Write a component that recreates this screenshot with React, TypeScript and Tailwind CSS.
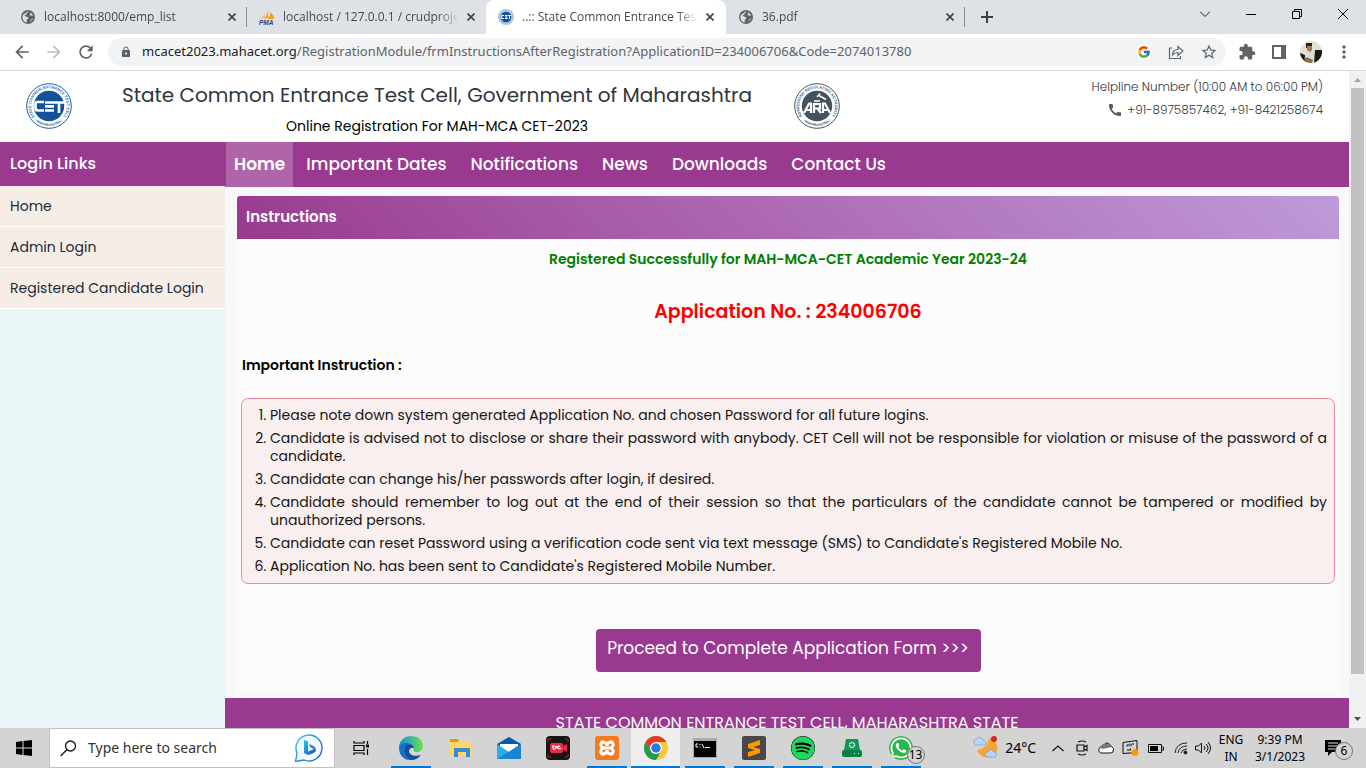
import React, { ReactNode } from "react";
import { FaWhatsapp, FaSpotify } from "react-icons/fa";
import { FcGoogle } from "react-icons/fc";
import { MdExtension, MdCall, MdLock, MdArrowBack, MdArrowForward, MdRefresh, MdStarBorder, MdMoreVert } from "react-icons/md";

const seals = {
  cet: { ring: "#1d5fa8", fill: "#12529b", top: "STATE COMMON ENTRANCE TEST CELL", name: "CET" },
  ara: { ring: "#46545c", fill: "#43535b", top: "ADMISSIONS REGULATING AUTHORITY", name: "ARA" },
};

function Seal({ kind }: { kind: "cet" | "ara" }) {
  const s = seals[kind];
  const id = "arc-" + kind;
  return (
    <svg viewBox="0 0 46 46" className="size-[46px] shrink-0" role="img" aria-label={s.name + " logo"}>
      <defs>
        <path id={id} d="M8.500 33.500A17.800 17.800 0 1 1 37.500 33.500" />
        <path id={id + "b"} d="M6 34A20.500 20.500 0 0 0 40 34" />
      </defs>
      <circle cx="23" cy="23" r="22.3" fill="#fff" stroke={s.ring} strokeWidth="1" />
      <circle cx="23" cy="23" r="15.2" fill={s.fill} />
      <text fontSize="4" fontWeight="700" fill="#2f6ea8" fontFamily="Liberation Sans, sans-serif">
        <textPath href={"#" + id} startOffset="50%" textAnchor="middle">{s.top}</textPath>
      </text>
      <text fontSize="3.4" fontWeight="700" fill={s.ring} fontFamily="Liberation Sans, sans-serif">
        <textPath href={"#" + id + "b"} startOffset="50%" textAnchor="middle">• MAHARASHTRA •</textPath>
      </text>
      {kind === "cet" ? (
        <g fill="none" stroke="#fff" strokeWidth="2.7">
          <path d="M18 19H11Q9.500 19 9.500 21V25Q9.500 27.500 12 27.500H18M19 19.500H28M19 23.300H28M19 27.500H28M28 19.500H38M33 20V30" />
        </g>
      ) : (
        <g fill="none" stroke="#fff" strokeWidth="2.200">
          <path d="M10 30L15 20.500H17V30M12 27H17M20 30V21H26V25.500H21M23 25L27 30M29 30V20.500H31L36 30M29 27H34" />
          <path d="M20 18H26M23 14L26 10.500M25 12.500L32 16.500" strokeWidth="1.500" />
        </g>
      )}
    </svg>
  );
}

function CetFavicon() {
  return (
    <svg viewBox="0 0 16 16" className="size-4 shrink-0" aria-hidden="true">
      <circle cx="8" cy="8" r="8" fill="#a9c5e0" />
      <circle cx="8" cy="8" r="5.300" fill="#12529b" />
      <path d="M6 6.500H3.700V9.500H6M7 6.500H9.500M7 8H9.500M7 9.500H9.500M10 6.500H13M11.500 7V10" fill="none" stroke="#fff" />
    </svg>
  );
}

function Globe() {
  return (
    <svg viewBox="0 0 14 14" className="mx-px size-[14px] shrink-0" aria-hidden="true">
      <circle cx="7" cy="7" r="7" fill="#5f6368" />
      <path d="M7 1.300C8 2.500 5 3 5.500 4.500L3.500 5.500C4 7 7.500 6.300 7.500 8.300L5.800 9.500V12.600C2 12 .8 8 1.800 5M9 2C10 3.500 8 4 9 5.500H12.500M9 12.200C10 11 9.500 10 11 9L12.500 8.500" fill="#dee1e6" />
    </svg>
  );
}

function PmaIcon() {
  return (
    <svg viewBox="0 0 16 16" className="size-4 shrink-0" aria-hidden="true">
      <path d="M5 1Q6 6 2 10Q5 8 6 10Z" fill="#f7b85a" />
      <path d="M8 0Q9 6 5 10Q9 8 10 10Z" fill="#f89c0e" />
      <path d="M11 3Q15 6 15 10H9Q12 7 11 3Z" fill="#f89c0e" />
      <text x="0" y="16" fontSize="6.500" fontWeight="700" fontStyle="italic" fill="#353d70" fontFamily="Liberation Sans, sans-serif">PMA</text>
    </svg>
  );
}

function CloseX() {
  return (
    <svg viewBox="0 0 8 8" className="size-2" fill="none" stroke="#3c4043" strokeWidth="1.600" aria-hidden="true">
      <path d="M.5.5l7 7M7.500.5l-7 7" />
    </svg>
  );
}

function Tab({ icon, title, active, divider }: { icon: ReactNode; title: string; active?: boolean; divider?: boolean }) {
  return (
    <div className={active ? "relative flex h-[34px] w-[240px] items-center gap-1 rounded-t-lg bg-white pl-3 pr-2" : "relative flex h-[34px] w-[239px] items-center gap-1 pl-3 pr-[7px]"}>
      {icon}
      <a href="#tab" className="ml-1 min-w-0 flex-1 overflow-hidden whitespace-nowrap text-xs text-[#45484c] [mask-image:linear-gradient(to_right,black_88%,transparent)]">{title}</a>
      <button aria-label={"Close " + title} className="flex size-4 items-center justify-center"><CloseX /></button>
      {divider && <span className="absolute right-0 top-[7px] h-5 w-px bg-[#8a8d91]" />}
    </div>
  );
}

function BrowserBar() {
  return (
    <header className="shrink-0 font-['Open_Sans','Noto_Sans',sans-serif]">
      <div className="flex h-[34px] bg-[#dee1e6] pl-2">
        <Tab icon={<Globe />} title="localhost:8000/emp_list" divider />
        <Tab icon={<PmaIcon />} title="localhost / 127.0.0.1 / crudprojec" />
        <Tab icon={<CetFavicon />} title="..:: State Common Entrance Test C" active />
        <Tab icon={<Globe />} title="36.pdf" divider />
        <button aria-label="New tab" className="ml-[10px] flex w-6 items-center justify-center">
          <svg viewBox="0 0 12 12" className="size-3" stroke="#3c4043" strokeWidth="2" aria-hidden="true"><path d="M6 0v12M0 6h12" /></svg>
        </button>
        <div className="ml-auto flex h-7">
          <button aria-label="Search tabs" className="flex w-[46px] items-center justify-center"><svg viewBox="0 0 10 6" className="h-[6px] w-[10px]" fill="none" stroke="#222"><path d="M0 .5l5 5 5-5" /></svg></button>
          <button aria-label="Minimize" className="flex w-[46px] items-center justify-center"><span className="h-px w-[10px] bg-black" /></button>
          <button aria-label="Restore" className="flex w-[46px] items-center justify-center"><svg viewBox="0 0 10 10" className="size-[10px]" fill="none" stroke="#000"><path d="M.5 2.500h7v7h-7zM2.500 2.500v-2h7v7h-2" /></svg></button>
          <button aria-label="Close" className="flex w-[46px] items-center justify-center"><svg viewBox="0 0 10 10" className="size-[10px]" stroke="#000"><path d="M0 0l10 10M10 0L0 10" /></svg></button>
        </div>
      </div>
      <div className="flex h-[37px] items-center border-b border-[#d5d7da] bg-white pl-3 pr-3 text-[#5f6368]">
        <button aria-label="Back"><MdArrowBack className="size-5" /></button>
        <button aria-label="Forward" className="ml-3 text-[#bcbec1]"><MdArrowForward className="size-5" /></button>
        <button aria-label="Reload" className="ml-3"><MdRefresh className="size-5" /></button>
        <div className="ml-3 flex h-7 flex-1 items-center rounded-full bg-[#f1f3f4] pl-3 pr-2">
          <MdLock className="size-3 shrink-0" />
          <a href="#address" className="ml-[10px] flex-1 whitespace-nowrap font-['Noto_Sans',sans-serif] text-[13px]"><span className="text-[#202124]">mcacet2023.mahacet.org</span>/RegistrationModule/frmInstructionsAfterRegistration?ApplicationID=234006706&amp;Code=2074013780</a>
          <button aria-label="Google search" className="flex size-4 items-center justify-center rounded-full bg-white"><FcGoogle className="size-[14px]" /></button>
          <button aria-label="Share" className="ml-4"><svg viewBox="0 0 16 16" className="size-4" fill="none" stroke="#5f6368" strokeWidth="1.200"><path d="M4 4H1.500v10.500h11V12M4.500 11Q4.500 5.500 10 5.500V2.500l5 4.500-5 4.500V8.500Q6.500 8.500 4.500 11Z" /></svg></button>
          <button aria-label="Bookmark" className="ml-4"><MdStarBorder className="size-[18px]" /></button>
        </div>
        <button aria-label="Extensions" className="ml-3"><MdExtension className="size-[18px]" /></button>
        <button aria-label="Side panel" className="ml-4"><svg viewBox="0 0 14 14" className="size-[14px]"><path d="M1 1h12v12H1z" fill="#fff" stroke="#5f6368" strokeWidth="2" /><path d="M9 0h5v14H9z" fill="#5f6368" /></svg></button>
        <button aria-label="Profile" className="ml-[14px]">
          <svg viewBox="0 0 22 22" className="size-[22px]">
            <defs><clipPath id="face"><circle cx="11" cy="11" r="11" /></clipPath></defs>
            <g clipPath="url(#face)"><path d="M0 0h22v22H0z" fill="#e4e0d2" /><path d="M0 12l5 2 1 8H0zM15 9h7v13h-8z" fill="#17191b" /><path d="M5 10q5-3 9 1v8H5z" fill="#dedbd4" /><path d="M7 4h5v5l-2 2-3-2z" fill="#a17759" /><path d="M6 2h6v3H7v2H6z" fill="#252324" /><path d="M4 16l5 1 4 2-1 3H5z" fill="#8f6b4c" /></g>
          </svg>
        </button>
        <button aria-label="Menu" className="ml-3"><MdMoreVert className="size-5" /></button>
      </div>
    </header>
  );
}

const navItems = ["Important Dates", "Notifications", "News", "Downloads", "Contact Us"];
const sideItems = ["Home", "Admin Login", "Registered Candidate Login"];
const instructions = [
  "Please note down system generated Application No. and chosen Password for all future logins.",
  "Candidate is advised not to disclose or share their password with anybody. CET Cell will not be responsible for violation or misuse of the password of a candidate.",
  "Candidate can change his/her passwords after login, if desired.",
  "Candidate should remember to log out at the end of their session so that the particulars of the candidate cannot be tampered or modified by unauthorized persons.",
  "Candidate can reset Password using a verification code sent via text message (SMS) to Candidate's Registered Mobile No.",
  "Application No. has been sent to Candidate's Registered Mobile Number.",
];

function SitePage() {
  return (
    <div className="flex min-w-0 flex-1 flex-col bg-white font-[Poppins,Inter,sans-serif]">
      <div className="flex h-[71px] shrink-0 items-start px-[26px]">
        <div className="pt-3"><Seal kind="cet" /></div>
        <div className="ml-[30px] w-[670px] pt-2 text-center">
          <h1 className="whitespace-nowrap text-xl leading-8 text-[#2f353b]">State Common Entrance Test Cell, Government of Maharashtra</h1>
          <p className="text-sm leading-[30px] text-black">Online Registration For MAH-MCA CET-2023</p>
        </div>
        <div className="ml-[22px] pt-3"><Seal kind="ara" /></div>
        <div className="ml-auto whitespace-nowrap pt-1 text-right text-xs font-light leading-[23px] text-[#2f353b]">
          <p>Helpline Number (10:00 AM to 06:00 PM)</p>
          <p className="flex items-center justify-end gap-1"><MdCall className="size-4 text-[#55595c]" />+91-8975857462, +91-8421258674</p>
        </div>
      </div>
      <div className="flex min-h-0 flex-1">
        <aside className="w-[225px] shrink-0 bg-[#e8f6f8]">
          <h2 className="h-11 bg-[#993990] pl-[10px] text-base font-medium leading-[44px] text-white">Login Links</h2>
          <nav>
            {sideItems.map((t) => (
              <a key={t} href="#login" className="block h-[41px] border-b border-white bg-[#f5ede6] pl-[10px] text-sm leading-10 text-[#1b2b38]">{t}</a>
            ))}
          </nav>
        </aside>
        <main className="flex min-w-0 flex-1 flex-col overflow-hidden bg-[#f8f8f8]">
          <nav className="flex h-[45px] shrink-0 items-center gap-6 bg-[#993990] pl-px text-[17px] text-white">
            <a href="#home" className="-mr-[11px] flex h-full items-center bg-[#b064a9] px-2 font-semibold">Home</a>
            {navItems.map((t) => <a key={t} href="#nav" className="whitespace-nowrap font-medium">{t}</a>)}
          </nav>
          <section className="ml-3 mr-[10px] mt-[9px] shrink-0 bg-[#fcfcfc]">
            <h2 className="h-[43px] rounded-t-[3px] bg-linear-45 from-[#993990] to-[#be9ad9] pl-[9px] text-[15px] font-semibold leading-[41px] text-white">Instructions</h2>
            <p className="pt-[10px] text-center text-sm font-semibold leading-5 text-[#008000]">Registered Successfully for MAH-MCA-CET Academic Year 2023-24</p>
            <p className="pt-[30px] text-center text-[19px] font-semibold leading-[26px] text-[#ff0000]">Application No. : 234006706</p>
            <h3 className="pl-[5px] pt-[30px] text-sm font-semibold leading-5 text-black">Important Instruction :</h3>
            <ol className="mx-1 mt-[23px] list-decimal space-y-[5px] rounded-[7px] border border-[#ee8a98] bg-[#f8efee] pb-2 pl-7 pr-[7px] pt-[7px] text-justify text-sm leading-[18px] text-[#151515]">
              {instructions.map((t) => <li key={t}>{t}</li>)}
            </ol>
            <div className="flex justify-center pb-5 pt-[45px]">
              <button className="h-[43px] w-[385px] rounded bg-[#993990] pb-1 text-[17px] text-white">Proceed to Complete Application Form &gt;&gt;&gt;</button>
            </div>
          </section>
          <footer className="mt-[6px] min-h-[120px] shrink-0 bg-[#993990] pt-[14px] text-center text-base leading-[22px] text-white">STATE COMMON ENTRANCE TEST CELL, MAHARASHTRA STATE</footer>
        </main>
      </div>
    </div>
  );
}

function ScrollBar() {
  return (
    <div className="flex w-[17px] shrink-0 flex-col items-center bg-[#f1f1f1]" aria-hidden="true">
      <svg viewBox="0 0 17 17" className="size-[17px]"><path d="M5 11l3.500-4 3.500 4z" fill="#a3a3a3" /></svg>
      <span className="w-[13px] flex-[586] bg-[#c1c1c1]" />
      <span className="flex-[37]" />
      <svg viewBox="0 0 17 17" className="size-[17px]"><path d="M5 6l3.500 4L12 6z" fill="#505050" /></svg>
    </div>
  );
}

const apps: { name: string; open?: boolean; active?: boolean; icon: ReactNode }[] = [
  { name: "Edge", open: true, icon: <svg viewBox="0 0 24 24" className="size-6"><defs><linearGradient id="eg" x1="0" x2="1"><stop stopColor="#168ed5" /><stop offset="1" stopColor="#6be350" /></linearGradient></defs><path d="M0 12C0 4 6 0 12 0c7 0 12 4 12 10 0 4-3 6-6 6-4 0-4-2-3-4 0-3-3-5-6-5-4 0-7 2-9 5Z" fill="url(#eg)" /><path d="M0 12c1-4 5-6 9-5 4 0 6 3 6 5-2-2-5 0-5 3 0 4 5 6 11 4-3 4-7 5-10 5C4 24 0 18 0 12Z" fill="#1471c5" /><path d="M8 9c-4 3-3 11 4 15 4 0 8-2 10-5-6 3-12 0-12-4 0-3 3-4 5-3-1-2-4-4-7-3Z" fill="#124f9b" /></svg> },
  { name: "File Explorer", icon: <svg viewBox="0 0 24 24" className="size-6"><path d="M2 3h8l2 2h11v15H2z" fill="#ffd766" /><path d="M2 3h8l1 3H2z" fill="#df9a13" /><path d="M6 12h16v9h-4v-5h-8v5H6z" fill="#368bd3" /></svg> },
  { name: "Mail", icon: <svg viewBox="0 0 24 24" className="size-6"><path d="M0 8l12-7 12 7v3H0z" fill="#0a58a8" /><path d="M3 8h18v8H3z" fill="#fff" /><path d="M0 8l12 8 12-8v15H0z" fill="#28aeea" /><path d="M0 23L24 8v15z" fill="#1b84d2" /></svg> },
  { name: "Screen Recorder", icon: <svg viewBox="0 0 24 24" className="size-6"><rect width="24" height="24" rx="4" fill="#151515" /><path d="M2 6V3h3M19 3h3v3M2 18v3h3M19 21h3v-3" stroke="#b91c2d" fill="none" /><rect x="4" y="7" width="13" height="10" rx="2" fill="#ed2945" /><path d="M16 11l5-3v8l-5-3z" fill="#ed2945" /><path d="M14 10.500q-2-1-4 1.500t-3 0 1-2 4 2 3 0" fill="none" stroke="#fff" strokeWidth="1.200" /></svg> },
  { name: "XAMPP", open: true, icon: <svg viewBox="0 0 24 24" className="size-6"><rect width="24" height="24" rx="3" fill="#f47a20" /><path d="M7 6q5 0 5 4 0-4 5-4 3 3-1 6 4 3 1 6-5 0-5-4 0 4-5 4-3-3 1-6-4-3-1-6Z" fill="none" stroke="#fff" strokeWidth="3" /><path d="M8 12h8" stroke="#fff" strokeWidth="3" /></svg> },
  { name: "Chrome", open: true, active: true, icon: <svg viewBox="0 0 24 24" className="size-6"><circle cx="12" cy="12" r="12" fill="#fcc934" /><path d="M1.600 6A12 12 0 0 1 22.400 6H12L6.800 15Z" fill="#e33b2e" /><path d="M1.600 6A12 12 0 0 0 12 24L17.200 15H6.800Z" fill="#1e9e4d" /><circle cx="12" cy="12" r="6" fill="#fff" /><circle cx="12" cy="12" r="4.700" fill="#2878e8" /></svg> },
  { name: "Command Prompt", open: true, icon: <svg viewBox="0 0 24 24" className="size-6"><path d="M0 2h24v20H0z" fill="#aaa" /><path d="M1 5h22v16H1z" fill="#050505" /><path d="M5 8H3v3h2M7 8v1M7 10.500v1M9 8l2 4M12 11.500h5" stroke="#fff" fill="none" /></svg> },
  { name: "Sublime Text", open: true, icon: <svg viewBox="0 0 24 24" className="size-6"><rect width="24" height="24" rx="2" fill="#484848" /><path d="M6 8l12-4v5l-7 2 7 2v4L6 21v-5l7-2-7-2z" fill="#ff9800" /></svg> },
  { name: "Spotify", open: true, icon: <span className="flex size-6 rounded-full bg-black"><FaSpotify className="size-6 text-[#1ed760]" /></span> },
  { name: "Drive Utility", open: true, icon: <svg viewBox="0 0 24 24" className="size-6"><path d="M6 3h12l2 11H4z" fill="#139454" /><rect x="2" y="14" width="20" height="7" rx="2" fill="#0a8044" /><circle cx="12" cy="9" r="2.500" fill="none" stroke="#dff8e5" strokeWidth="1.500" strokeDasharray="1.500 .6" /><path d="M14 17.500h1M18 17.500h1" stroke="#fff" /></svg> },
];

function Badge({ n }: { n: number }) {
  return <span className="absolute -bottom-1 -right-3 flex size-[18px] items-center justify-center rounded-full border border-[#777] bg-[#d4d4d4] text-xs text-black">{n}</span>;
}

function TaskBar() {
  return (
    <footer className="flex h-10 shrink-0 items-stretch bg-[#d4d4d4] font-['Noto_Sans',sans-serif] text-black">
      <button aria-label="Start" className="flex w-12 items-center justify-center"><svg viewBox="0 0 16 16" className="size-4"><path d="M0 2l6.500-1v6.500H0zM7.500 1L16 0v7.500H7.500zM0 8.500h6.500V15L0 14zM7.500 8.500H16V16l-8.500-1z" /></svg></button>
      <label className="ml-px flex w-[286px] items-center border border-[#c1c1c1] bg-white px-[10px]">
        <svg viewBox="0 0 17 17" className="size-[17px]" fill="none" stroke="#111" strokeWidth="1.300"><circle cx="10.500" cy="6" r="5" /><path d="M7 9.500L.7 16" /></svg>
        <input aria-label="Type here to search" placeholder="Type here to search" className="ml-[11px] min-w-0 flex-1 text-sm outline-none placeholder:text-[#333]" />
        <svg viewBox="0 0 30 30" className="size-[30px]" aria-hidden="true"><defs><linearGradient id="bg" x1="0" x2="1" y2="1"><stop stopColor="#25c5ef" /><stop offset="1" stopColor="#2350b5" /></linearGradient></defs><path d="M1.500 28.500L3 20A13 13 0 1 1 10 27Z" fill="#f1f8ff" stroke="url(#bg)" strokeWidth="1.300" /><path d="M10 7l4 1.500v10L20 16l-4-2-1-3q7 2 7 6 0 3-8 5l-4-2z" fill="url(#bg)" /></svg>
      </label>
      <button aria-label="Task View" className="flex w-[51px] items-center justify-center"><svg viewBox="0 0 16 16" className="size-4" fill="none" stroke="#000" strokeWidth="1.200"><path d="M1 1v2h10V1M1 5.500h10v5H1zM1 15v-2h10v2M14.500 1v3M14.500 9v6" /><path d="M13 4.500h3v3h-3z" fill="#000" stroke="none" /></svg></button>
      <nav className="flex items-stretch" aria-label="Applications">
        {apps.map((a) => (
          <button key={a.name} aria-label={a.name} className={a.active ? "flex w-[49px] flex-col items-center border-b-2 border-[#0078d7] bg-[#eeeeee] pt-2" : "flex w-[49px] flex-col items-center pt-2"}>
            {a.icon}
            {a.open && !a.active && <span className="mt-auto h-[2px] w-10 bg-[#0078d7]" />}
          </button>
        ))}
        <button aria-label="WhatsApp" className="flex w-[49px] flex-col items-center pt-2">
          <span className="relative flex size-6 items-center justify-center rounded-full bg-white"><FaWhatsapp className="size-6 rounded-full bg-[#29b64a] text-white" /><Badge n={13} /></span>
          <span className="mt-auto h-[2px] w-10 bg-[#0078d7]" />
        </button>
      </nav>
      <div className="ml-auto flex items-center whitespace-nowrap text-sm">
        <svg viewBox="0 0 26 24" className="h-6 w-[26px]"><path d="M16 2q-1 10-12 12 4 9 13 7 9-4 7-12-2-5-8-7Z" fill="#f7a52d" /><path d="M3 9h9q3-4-2-5Q6-1 4 3-2 5 3 9ZM14 21h8q4-3-1-5-4-5-6 0-5 1-1 5Z" fill="#b9d5fb" stroke="#6b9eda" strokeWidth=".7" /><circle cx="21" cy="3" r="3" fill="#d52b1e" /></svg>
        <span className="ml-[6px]">24°C</span>
        <svg viewBox="0 0 12 7" className="ml-4 h-[7px] w-3" fill="none" stroke="#111" strokeWidth="1.200"><path d="M.5 6L6 1l5.500 5" /></svg>
        <svg viewBox="0 0 12 16" className="ml-3 h-4 w-3" fill="none" stroke="#111" strokeWidth="1.200"><path d="M2 2q4-2 8 0M2 14q4 2 8 0M1 5h7v6H1zM8 7l3-1.500v5L8 9" /></svg>
        <svg viewBox="0 0 16 12" className="ml-[10px] h-3 w-4"><path d="M4 11q-4 0-3-4 1-3 4-3 4-6 8 0 4 2 2 6l-2 1z" fill="#fff" stroke="#111" /><path d="M2 5Q5 0 10 2l4 3-10 2z" fill="#777" /></svg>
        <svg viewBox="0 0 17 16" className="ml-2 h-4 w-[17px]" fill="none" stroke="#111"><path d="M1 2.500l14-2v12l-14 1zM5 6.500V5h3M5 10h3.500V8.500M8 3.500L9.500 5 8 6.500M11 5V3" /><circle cx="13" cy="12.500" r="3.500" fill="#ff9800" stroke="none" /></svg>
        <svg viewBox="0 0 16 9" className="ml-[9px] h-[9px] w-4"><path d="M.5.500h13v8H.5zM14 3h1.500v3H14" fill="none" stroke="#111" /><path d="M2 2h8v5H2z" /></svg>
        <svg viewBox="0 0 14 14" className="ml-[10px] size-[14px]" fill="none" stroke="#222"><path d="M1 12Q2 2 13 2M4 12Q5 5 13 5M7 12Q8 8 13 8" /><circle cx="11.500" cy="11.500" r="1.500" fill="#111" /></svg>
        <svg viewBox="0 0 16 14" className="ml-[7px] h-[14px] w-4" fill="none" stroke="#111"><path d="M.5 5h3l3-3v10l-3-3h-3zM9 5q2 2 0 4M11 3q4 4 0 8M13 1q5 6 0 12" /></svg>
        <span className="ml-2 flex w-6 flex-col items-center text-xs leading-[17px]"><span>ENG</span><span>IN</span></span>
        <span className="ml-3 flex w-[50px] flex-col items-center text-xs leading-[17px]"><span>9:39 PM</span><span>3/1/2023</span></span>
        <button aria-label="Notifications" className="relative ml-5 mr-[25px] size-4"><svg viewBox="0 0 16 16" className="size-4"><path d="M0 0h16v12H7l-4 4v-4H0z" /><path d="M3 3h10M3 6h10M3 9h7" stroke="#ddd" /></svg><Badge n={6} /></button>
      </div>
    </footer>
  );
}

export default function App() {
  return (
    <div className="flex h-screen flex-col overflow-hidden">
      <BrowserBar />
      <div className="flex min-h-0 flex-1"><SitePage /><ScrollBar /></div>
      <TaskBar />
    </div>
  );
}
